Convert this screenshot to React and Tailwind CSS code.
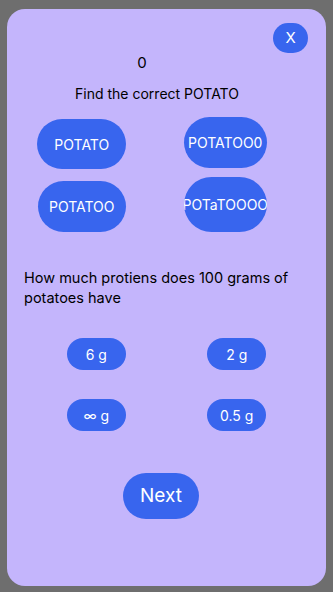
import React, { useState } from 'react';

const potatoes = [
  { label: 'POTATO', cls: 'w-[89px] h-[50px]' },
  { label: 'POTATOO0', cls: 'w-[83px] h-[51px] -mt-[2px]' },
  { label: 'POTATOO', cls: 'w-[88px] h-[51px]' },
  { label: 'POTaTOOOO', cls: 'w-[83px] h-[55px] -mt-[4px]' },
];

const answers = ['6 g', '2 g', '∞ g', '0.5 g'];

export default function App() {
  const [score, setScore] = useState(0);

  return (
    <div className="w-[333px] h-[592px] bg-[#6e6e6e] pt-[9px] px-[7px]" style={{ fontFamily: 'Inter, "Noto Sans", sans-serif' }}>
      <div className="h-[577px] rounded-[18px] bg-[#c4b5fc] flex flex-col text-black">
        {/* Header */}
        <div className="flex justify-end pt-[14px] pr-[18px]">
          <button className="w-[35px] h-[30px] rounded-full bg-[#3865ee] text-white text-[15px] flex items-center justify-center">
            X
          </button>
        </div>
        <div className="text-center pr-[49px] text-[15px] leading-[18px] mt-[1px]">{score}</div>
        <div className="text-center pr-[19px] text-[14px] leading-[18px] mt-[13px]">Find the correct POTATO</div>

        {/* Potato options */}
        <div className="grid grid-cols-2 gap-y-[12px] pl-[3px] pr-[29px] mt-[16px] justify-items-center items-start">
          {potatoes.map((p, i) => (
            <button
              key={i}
              onClick={() => i === 0 && setScore(score + 1)}
              className={`${p.cls} rounded-full bg-[#3865ee] text-white text-[14px] flex items-center justify-center overflow-hidden whitespace-nowrap`}
            >
              {p.label}
            </button>
          ))}
        </div>

        {/* Question */}
        <p className="text-[14.5px] leading-[20px] pl-[17px] pr-[20px] mt-[36px]">
          How much protiens does 100 grams of potatoes have
        </p>

        <div className="grid grid-cols-2 gap-y-[29px] pl-[19px] pr-[19px] mt-[30px] justify-items-center">
          {answers.map((a) => (
            <button key={a} className="w-[59px] h-[32px] rounded-full bg-[#3865ee] text-white text-[14px] flex items-center justify-center">
              {a}
            </button>
          ))}
        </div>

        <div className="flex justify-center pr-[11px] mt-[42px]">
          <button className="w-[76px] h-[46px] rounded-full bg-[#3865ee] text-white text-[19px] flex items-center justify-center">
            Next
          </button>
        </div>
      </div>
    </div>
  );
}
